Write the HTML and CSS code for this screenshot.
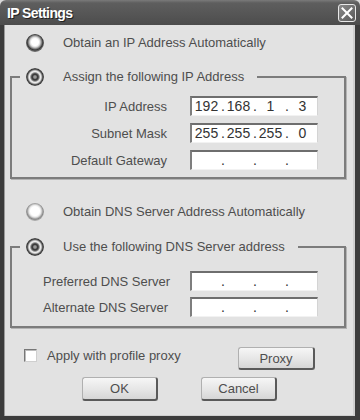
FILE: index.html
```html
<!DOCTYPE html>
<html lang="en">
<head>
    <meta charset="UTF-8">
    <meta name="viewport" content="width=device-width, initial-scale=1.0">
    <title>IP Settings</title>
    <link rel="stylesheet" href="styles.css">
</head>
<body>
    <div class="window">
        <div class="titlebar">
            <span class="title">IP Settings</span>
            <span class="close-btn">
                <svg width="12" height="12" viewBox="0 0 12 12">
                    <path d="M1.5 1.5 L10.5 10.5 M10.5 1.5 L1.5 10.5" stroke="#fff" stroke-width="2" stroke-linecap="square"/>
                </svg>
            </span>
        </div>

        <div class="frame">
            <div class="content">
                <div class="option option-first">
                    <span class="radio"></span>
                    <span>Obtain an IP Address Automatically</span>
                </div>

                <fieldset class="group ip-group">
                    <legend class="option">
                        <span class="radio checked"></span>
                        <span>Assign the following IP Address</span>
                    </legend>
                    <div class="field-grid ip-grid">
                        <label>IP Address</label>
                        <div class="ip-box">
                            <span>192</span><span>.</span><span>168</span><span>.</span><span>1</span><span>.</span><span>3</span>
                        </div>
                        <label>Subnet Mask</label>
                        <div class="ip-box">
                            <span>255</span><span>.</span><span>255</span><span>.</span><span>255</span><span>.</span><span>0</span>
                        </div>
                        <label>Default Gateway</label>
                        <div class="ip-box">
                            <span></span><span>.</span><span></span><span>.</span><span></span><span>.</span><span></span>
                        </div>
                    </div>
                </fieldset>

                <div class="option option-dns">
                    <span class="radio light"></span>
                    <span>Obtain DNS Server Address Automatically</span>
                </div>

                <fieldset class="group dns-group">
                    <legend class="option">
                        <span class="radio checked"></span>
                        <span>Use the following DNS Server address</span>
                    </legend>
                    <div class="field-grid dns-grid">
                        <label>Preferred DNS Server</label>
                        <div class="ip-box">
                            <span></span><span>.</span><span></span><span>.</span><span></span><span>.</span><span></span>
                        </div>
                        <label>Alternate DNS Server</label>
                        <div class="ip-box">
                            <span></span><span>.</span><span></span><span>.</span><span></span><span>.</span><span></span>
                        </div>
                    </div>
                </fieldset>

                <div class="proxy-row">
                    <div class="check-label">
                        <span class="checkbox"></span>
                        <span>Apply with profile proxy</span>
                    </div>
                    <button class="btn proxy-btn">Proxy</button>
                </div>

                <div class="button-row">
                    <button class="btn">OK</button>
                    <button class="btn">Cancel</button>
                </div>
            </div>
        </div>
    </div>
</body>
</html>
```

FILE: styles.css
```css
* {
    margin: 0;
    padding: 0;
    box-sizing: border-box;
    font-family: 'Liberation Sans', Arial, sans-serif;
}

body {
    background: #d8d8d8;
}

.window {
    width: 360px;
    height: 420px;
    display: flex;
    flex-direction: column;
    overflow: hidden;
    border-radius: 6px 6px 0 0;
}

.titlebar {
    height: 25px;
    flex-shrink: 0;
    display: flex;
    align-items: center;
    justify-content: space-between;
    padding: 0 4px 0 7px;
    background: linear-gradient(#7a7a7a 0, #5e5e5e 3px, #555 60%, #4c4c4c 100%);
}

.title {
    color: #fff;
    font-size: 14px;
    font-weight: bold;
    letter-spacing: -0.6px;
    text-shadow: 1px 1px 0 #222;
}

.close-btn {
    width: 18px;
    height: 18px;
    display: flex;
    align-items: center;
    justify-content: center;
    border: 1px solid #e8e8e8;
    border-radius: 3px;
    background: linear-gradient(135deg, #8a8a8a, #5a5a5a);
}

.frame {
    flex: 1;
    padding: 0 5px 4px 4px;
    background: #3c3c3c;
}

.content {
    height: 100%;
    background: #e2e2e2;
    box-shadow: inset 1px 0 0 #9a9a9a, inset -2px 0 0 #cfcfcf, inset 0 -1px 0 #cfcfcf;
    color: #4e4e4e;
    font-size: 13px;
    padding-top: 9px;
}

.option {
    display: flex;
    align-items: center;
    gap: 19px;
    height: 18px;
    line-height: 18px;
}

.option-first {
    margin-left: 22px;
}

.option-dns {
    margin: 24px 0 0 22px;
}

.radio {
    width: 18px;
    height: 18px;
    border-radius: 50%;
    flex-shrink: 0;
    background: radial-gradient(circle at 50% 45%, #fff 0, #fff 3.5px, #dcdcdc 5px, #8a8a8a 6.5px, #3a3a3a 7.8px, #6a6a6a 9px);
}

.radio.light {
    background: radial-gradient(circle at 50% 45%, #fff 0, #fff 4.5px, #e8e8e8 6px, #b0b0b0 7.3px, #888 8.2px, #a8a8a8 9px);
}

.radio.checked {
    background: radial-gradient(circle at 50% 50%, #9a9a9a 0, #9a9a9a 1.2px, #3c3c3c 2.4px, #3c3c3c 3.2px, #9a9a9a 4.4px, #f4f4f4 5.3px, #d4d4d4 6.3px, #6a6a6a 7.3px, #333 8.2px, #707070 9px);
}

.group {
    border: 2px solid #7c7c7c;
    box-shadow: 1px 1px 0 #b4b4b4;
    margin: 0 9px 0 6px;
    min-width: 0;
}

.group legend {
    margin-left: 8px;
    padding: 0 13px 0 6px;
}

.ip-group {
    margin-top: 16px;
    padding: 10px 0 7px 0;
}

.dns-group {
    margin-top: 17px;
    padding: 15px 0 9px 0;
}

.field-grid {
    display: grid;
    grid-auto-rows: 20px;
    align-items: center;
}

.ip-grid {
    grid-template-columns: 155px 128px;
    column-gap: 23px;
    row-gap: 7px;
}

.ip-grid label {
    text-align: right;
}

.dns-grid {
    grid-template-columns: 147px 128px;
    row-gap: 6px;
    padding-left: 31px;
}

.ip-box {
    width: 128px;
    height: 20px;
    display: grid;
    grid-template-columns: 29px 3px 29px 3px 29px 3px 29px;
    background: #fff;
    border-top: 2px solid #6e6e6e;
    border-left: 2px solid #7e7e7e;
    border-right: 1px solid #d4d4d4;
    border-bottom: 1px solid #f2f2f2;
    color: #333;
    font-size: 14px;
    line-height: 17px;
    text-align: center;
}

.proxy-row {
    display: flex;
    align-items: flex-start;
    margin-top: 19px;
    padding: 0 40px 0 20px;
}

.check-label {
    display: flex;
    align-items: center;
    gap: 10px;
    height: 13px;
    margin-top: 2px;
}

.checkbox {
    width: 13px;
    height: 13px;
    background: #fff;
    border-top: 1px solid #777;
    border-left: 1px solid #777;
    border-right: 1px solid #cfcfcf;
    border-bottom: 1px solid #cfcfcf;
    box-shadow: inset 1px 1px 0 #bbb;
}

.btn {
    width: 76px;
    height: 24px;
    background: linear-gradient(#f6f6f6, #e4e4e4 60%, #d6d6d6);
    border: 1px solid #b0b0b0;
    border-right: 2px solid #5a5a5a;
    border-bottom: 2px solid #5a5a5a;
    border-radius: 3px;
    color: #4e4e4e;
    font-size: 13px;
}

.proxy-btn {
    width: 77px;
    height: 23px;
    margin-left: auto;
}

.button-row {
    display: flex;
    justify-content: center;
    gap: 43px;
    margin-top: 7px;
}
```
